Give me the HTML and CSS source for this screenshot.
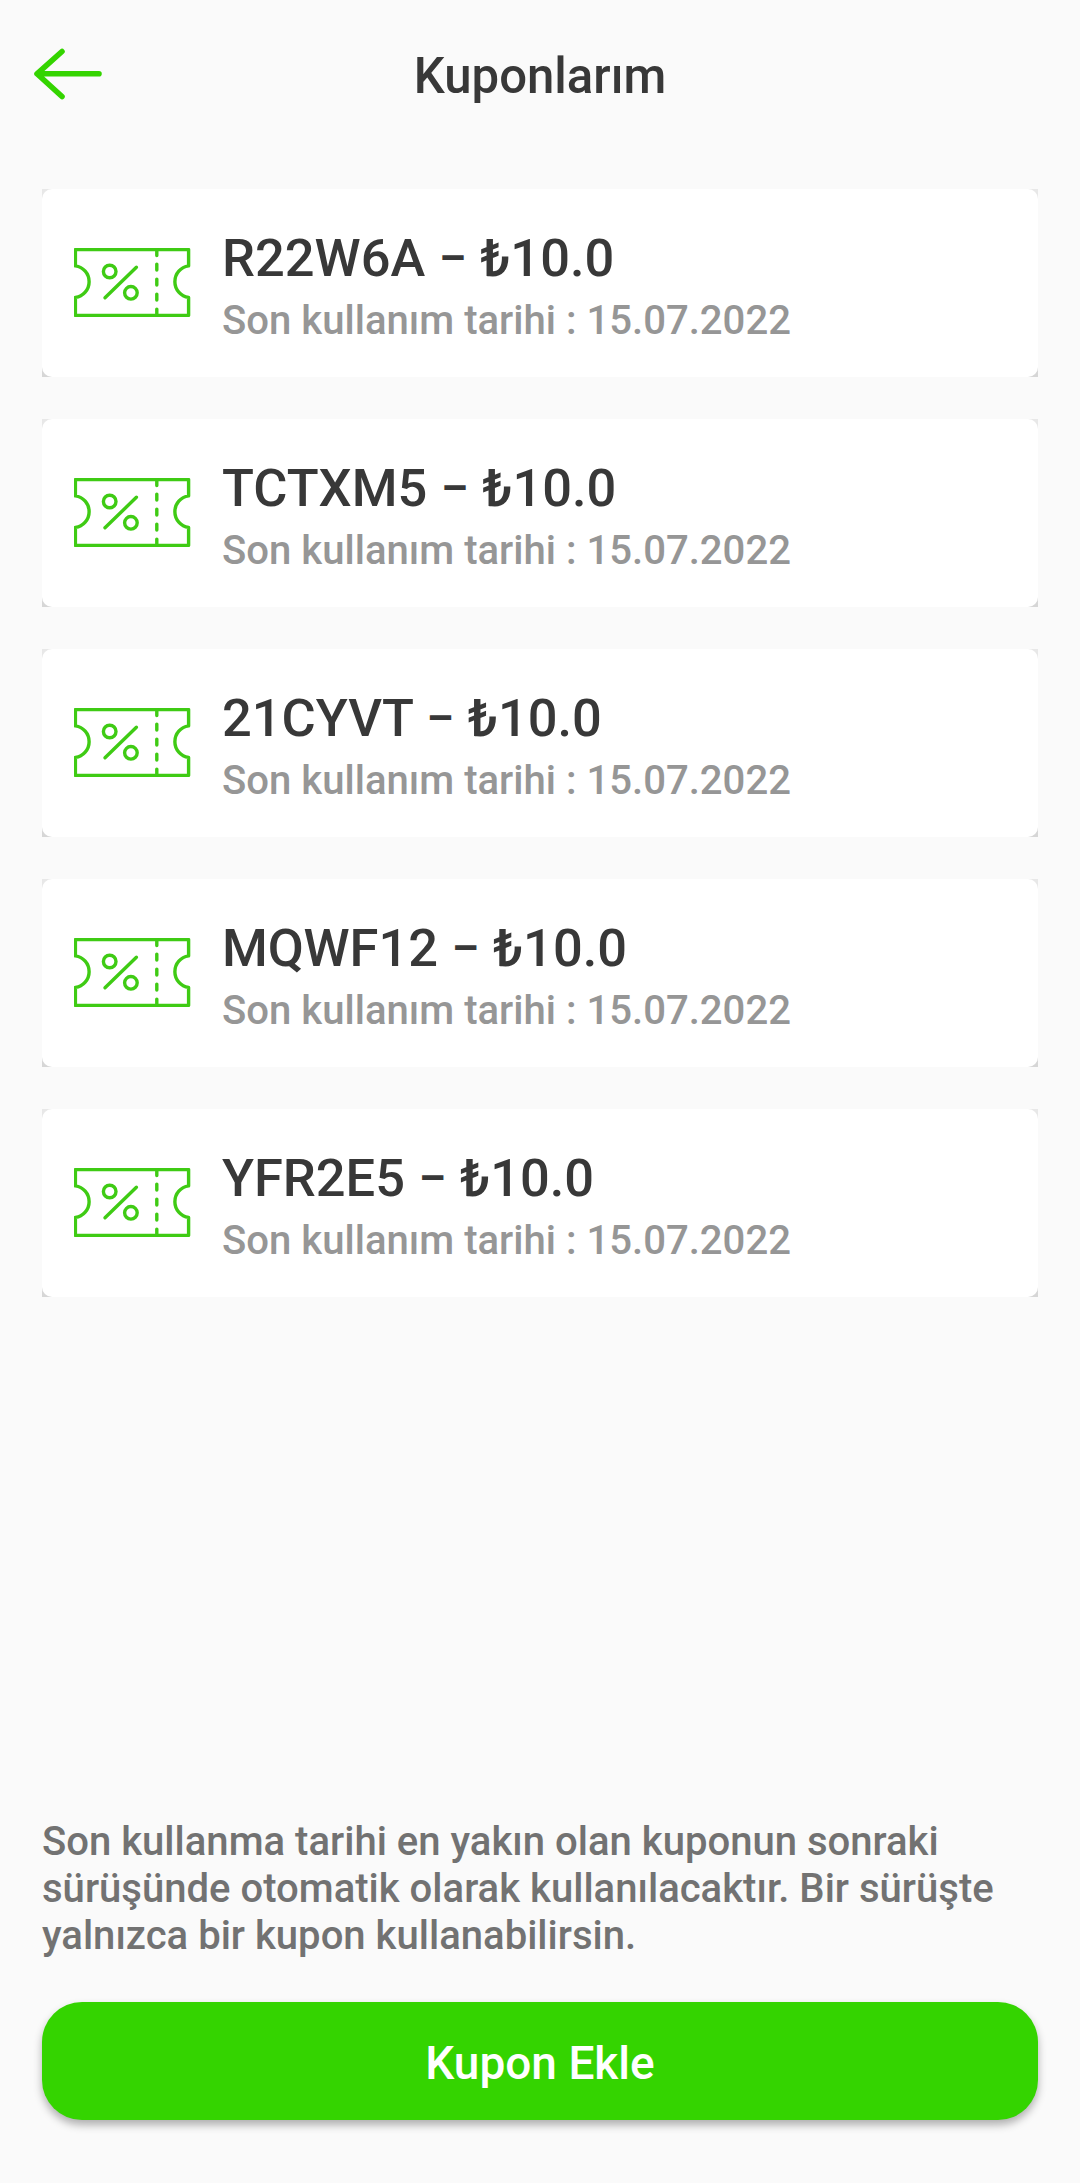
FILE: index.html
```html
<!DOCTYPE html>
<html lang="tr">
<head>
    <meta charset="UTF-8">
    <meta name="viewport" content="width=device-width, initial-scale=1.0">
    <title>Kuponlarım</title>
    <link rel="stylesheet" href="styles.css">
</head>
<body>
    <!-- Shared ticket icon -->
    <svg class="sprite" width="0" height="0">
        <symbol id="ticket" viewBox="0.6 0.4 118 70">
            <path d="M2 2H115.2V18.3A15.9 15.9 0 0 0 115.2 49.8V67.8H2V49.8A15.9 15.9 0 0 0 2 18.3Z"/>
            <path d="M83.4 2V8M83.4 16.5V22.5M83.4 31.5V37.5M83.4 46.5V52.5M83.4 61.5V67"/>
            <path d="M31.6 50.2L63 19.7"/>
            <circle cx="36.3" cy="23.9" r="6.3"/>
            <circle cx="57.5" cy="45.2" r="6.3"/>
        </symbol>
    </svg>

    <div class="screen">
        <header class="header">
            <a class="back" href="#" aria-label="Geri">
                <svg width="70" height="52" viewBox="0 0 70 52">
                    <path d="M29 3.5L4 25.8L29 48.5M5 25.8H66"/>
                </svg>
            </a>
            <h1 class="title">Kuponlarım</h1>
        </header>

        <main class="coupons">
            <div class="coupon">
                <div class="coupon-body">
                    <svg class="ticket"><use href="#ticket"/></svg>
                    <div class="info">
                        <div class="code">R22W6A <span class="dash">–</span> ₺10.0</div>
                        <div class="date">Son kullanım tarihi : 15.07.2022</div>
                    </div>
                </div>
            </div>
            <div class="coupon">
                <div class="coupon-body">
                    <svg class="ticket"><use href="#ticket"/></svg>
                    <div class="info">
                        <div class="code">TCTXM5 <span class="dash">–</span> ₺10.0</div>
                        <div class="date">Son kullanım tarihi : 15.07.2022</div>
                    </div>
                </div>
            </div>
            <div class="coupon">
                <div class="coupon-body">
                    <svg class="ticket"><use href="#ticket"/></svg>
                    <div class="info">
                        <div class="code">21CYVT <span class="dash">–</span> ₺10.0</div>
                        <div class="date">Son kullanım tarihi : 15.07.2022</div>
                    </div>
                </div>
            </div>
            <div class="coupon">
                <div class="coupon-body">
                    <svg class="ticket"><use href="#ticket"/></svg>
                    <div class="info">
                        <div class="code">MQWF12 <span class="dash">–</span> ₺10.0</div>
                        <div class="date">Son kullanım tarihi : 15.07.2022</div>
                    </div>
                </div>
            </div>
            <div class="coupon">
                <div class="coupon-body">
                    <svg class="ticket"><use href="#ticket"/></svg>
                    <div class="info">
                        <div class="code">YFR2E5 <span class="dash">–</span> ₺10.0</div>
                        <div class="date">Son kullanım tarihi : 15.07.2022</div>
                    </div>
                </div>
            </div>
        </main>

        <footer class="footer">
            <p class="note">Son kullanma tarihi en yakın olan kuponun sonraki sürüşünde otomatik olarak kullanılacaktır. Bir sürüşte yalnızca bir kupon kullanabilirsin.</p>
            <button class="add">Kupon Ekle</button>
        </footer>
    </div>
</body>
</html>
```

FILE: styles.css
```css
* {
    box-sizing: border-box;
}
body {
    margin: 0;
    background: #fafafa;
    font-family: Roboto, "Liberation Sans", sans-serif;
    font-weight: 500;
    color: #383838;
}
.sprite {
    display: block;
}
.screen {
    display: flex;
    flex-direction: column;
    height: 2183px;
    padding-bottom: 63px;
}
.header {
    display: grid;
    grid-template-columns: 70px 1fr 70px;
    align-items: center;
    height: 147px;
    padding: 0 33px;
}
.back svg {
    display: block;
    fill: none;
    stroke: #34d400;
    stroke-width: 5.6;
    stroke-linecap: round;
    stroke-linejoin: round;
}
.title {
    margin: 5px 0 0;
    text-align: center;
    font-size: 49.1px;
    font-weight: 500;
    line-height: 58px;
}
.coupons {
    display: flex;
    flex-direction: column;
    gap: 42px;
    padding: 42px 42px 0;
}
/* grey shows only behind the rounded corners */
.coupon {
    background: linear-gradient(#e8e8e8, #d6d6d6);
}
.coupon-body {
    display: flex;
    align-items: center;
    height: 188px;
    padding-left: 32px;
    background: #fff;
    border-radius: 10px;
}
.ticket {
    width: 118px;
    height: 70px;
    fill: none;
    stroke: #3fcb14;
    stroke-width: 3.4;
    stroke-linecap: round;
    stroke-linejoin: round;
}
.info {
    margin-left: 30px;
    padding-top: 4px;
}
.code {
    font-size: 52.4px;
    line-height: 62px;
}
.dash {
    margin: 0 1.5px 0 1px;
    font-size: 42px;
    font-weight: 700;
    line-height: 1;
    vertical-align: 3px;
}
.date {
    font-size: 40.1px;
    line-height: 47px;
    margin-top: 8px;
    color: #969696;
}
.footer {
    margin-top: auto;
    padding: 0 42px;
}
.note {
    margin: 0 0 43px;
    font-size: 40.05px;
    line-height: 47px;
    color: #727272;
}
.add {
    display: block;
    width: 100%;
    height: 118px;
    padding: 4px 0 0;
    border: 0;
    border-radius: 40px;
    background: #34d400;
    box-shadow: 0 5px 9px rgba(0, 0, 0, 0.3);
    color: #fff;
    font-family: inherit;
    font-size: 46px;
    font-weight: 500;
}
```
